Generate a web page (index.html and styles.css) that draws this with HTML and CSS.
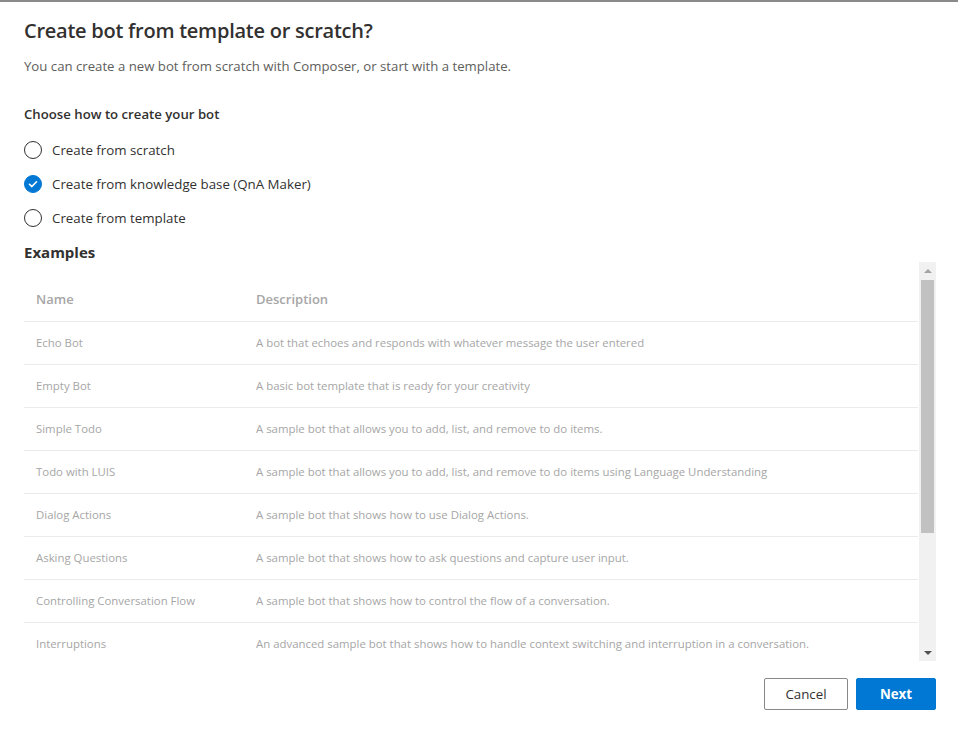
FILE: index.html
```html
<!DOCTYPE html>
<html>
<head>
<meta charset="utf-8">
<link rel="stylesheet" href="styles.css">
</head>
<body>
<div class="dialog">
  <h1 class="title">Create bot from template or scratch?</h1>
  <p class="subtitle">You can create a new bot from scratch with Composer, or start with a template.</p>
  <div class="choice-label">Choose how to create your bot</div>
  <div class="radios">
    <div class="radio"><span class="circle"></span><span>Create from scratch</span></div>
    <div class="radio"><span class="circle checked"><svg viewBox="0 0 20 20" width="20" height="20"><path d="M5.6 10.3 L8.6 13.2 L14.4 7.2" fill="none" stroke="#fff" stroke-width="2" stroke-linecap="round" stroke-linejoin="round"/></svg></span><span>Create from knowledge base (QnA Maker)</span></div>
    <div class="radio"><span class="circle"></span><span>Create from template</span></div>
  </div>
  <h2 class="examples">Examples</h2>
  <div class="list-wrap">
    <div class="list">
      <div class="row header"><div class="c-name">Name</div><div class="c-desc">Description</div></div>
      <div class="row"><div class="c-name">Echo Bot</div><div class="c-desc">A bot that echoes and responds with whatever message the user entered</div></div>
      <div class="row"><div class="c-name">Empty Bot</div><div class="c-desc">A basic bot template that is ready for your creativity</div></div>
      <div class="row"><div class="c-name">Simple Todo</div><div class="c-desc">A sample bot that allows you to add, list, and remove to do items.</div></div>
      <div class="row"><div class="c-name">Todo with LUIS</div><div class="c-desc">A sample bot that allows you to add, list, and remove to do items using Language Understanding</div></div>
      <div class="row"><div class="c-name">Dialog Actions</div><div class="c-desc">A sample bot that shows how to use Dialog Actions.</div></div>
      <div class="row"><div class="c-name">Asking Questions</div><div class="c-desc">A sample bot that shows how to ask questions and capture user input.</div></div>
      <div class="row"><div class="c-name">Controlling Conversation Flow</div><div class="c-desc">A sample bot that shows how to control the flow of a conversation.</div></div>
      <div class="row"><div class="c-name">Interruptions</div><div class="c-desc">An advanced sample bot that shows how to handle context switching and interruption in a conversation.</div></div>
    </div>
    <div class="scrollbar">
      <div class="arrow up"></div>
      <div class="track"><div class="thumb"></div></div>
      <div class="arrow down"></div>
    </div>
  </div>
  <div class="footer">
    <button class="btn default">Cancel</button>
    <button class="btn primary">Next</button>
  </div>
</div>
</body>
</html>
```

FILE: styles.css
```css
html, body {
  margin: 0;
  padding: 0;
  background: #fff;
}
body {
  font-family: "Open Sans", "Noto Sans", sans-serif;
  color: #323130;
}
.dialog {
  border-top: 2px solid #8a8a8a;
  padding: 15px 22px 0 24px;
  height: 733px;
  box-sizing: border-box;
}
.title {
  margin: 0;
  font-size: 20px;
  line-height: 28px;
  font-weight: 600;
  color: #323130;
  letter-spacing: -0.25px;
}
.subtitle {
  margin: 11px 0 0;
  font-size: 13.2px;
  line-height: 20px;
  color: #605e5c;
}
.choice-label {
  margin-top: 28px;
  font-size: 13.2px;
  line-height: 20px;
  font-weight: 600;
}
.radios {
  margin-top: 16px;
  display: flex;
  flex-direction: column;
  gap: 14px;
}
.radio {
  display: flex;
  align-items: center;
  gap: 10px;
  height: 20px;
  font-size: 13.3px;
  color: #323130;
}
.circle {
  width: 18px;
  height: 18px;
  border: 1px solid #323130;
  border-radius: 50%;
  box-sizing: border-box;
  display: flex;
  align-items: center;
  justify-content: center;
  flex: none;
}
.circle.checked {
  background: #0078d4;
  border-color: #0078d4;
}
.circle.checked svg {
  width: 18px;
  height: 18px;
}
.examples {
  margin: 13px 0 0;
  font-size: 15px;
  line-height: 22px;
  font-weight: 700;
  color: #323130;
}
.list-wrap {
  margin-top: -1px;
  display: flex;
  height: 399px;
}
.list {
  flex: 1;
  overflow: hidden;
  padding-top: 17px;
  margin-right: 1px;
}
.row {
  display: flex;
  align-items: center;
  height: 43px;
  padding-bottom: 2px;
  border-bottom: 1px solid #edebe9;
  box-sizing: border-box;
  font-size: 11.4px;
  color: #a6a6a6;
}
.row.header {
  font-size: 13px;
  font-weight: 600;
  color: #a6a6a6;
}
.c-name {
  width: 196px;
  padding: 0 12px;
  flex: none;
  white-space: nowrap;
}
.c-desc {
  padding: 0 12px;
  white-space: nowrap;
}
.scrollbar {
  width: 17px;
  background: #f1f1f1;
  display: flex;
  flex-direction: column;
  flex: none;
}
.arrow {
  height: 17px;
  display: flex;
  align-items: center;
  justify-content: center;
  flex: none;
}
.arrow::before {
  content: "";
  border-left: 4px solid transparent;
  border-right: 4px solid transparent;
}
.arrow.up::before {
  border-bottom: 4px solid #a3a3a3;
}
.arrow.down::before {
  border-top: 4px solid #505050;
}
.track {
  flex: 1;
  padding: 1px 2px 0;
}
.thumb {
  height: 253px;
  background: #c1c1c1;
}
.footer {
  display: flex;
  justify-content: flex-end;
  gap: 8px;
  margin-top: 17px;
}
.btn {
  height: 32px;
  border-radius: 2px;
  font-family: "Open Sans", "Noto Sans", sans-serif;
  font-size: 13.3px;
  padding: 0 16px;
  cursor: pointer;
}
.btn.default {
  width: 84px;
  background: #fff;
  border: 1px solid #8a8886;
  color: #323130;
}
.btn.primary {
  width: 80px;
  background: #0078d4;
  border: 1px solid #0078d4;
  color: #fff;
  font-weight: 700;
}
```
